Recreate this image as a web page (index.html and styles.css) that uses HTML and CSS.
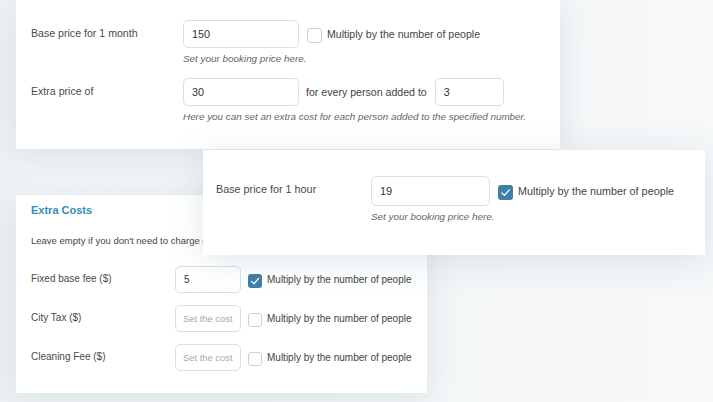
FILE: index.html
```html
<!DOCTYPE html>
<html lang="en">
<head>
    <meta charset="UTF-8">
    <meta name="viewport" content="width=device-width, initial-scale=1.0">
    <title>Booking prices</title>
    <link rel="stylesheet" href="styles.css">
</head>
<body>

    <div class="canvas">

        <!-- Monthly price card -->
        <div class="card card-month">
            <div class="row">
                <label class="lbl">Base price for 1 month</label>
                <div class="field">
                    <div class="line">
                        <span class="input wide">150</span>
                        <span class="box"></span>
                        <span class="txt">Multiply by the number of people</span>
                    </div>
                    <p class="desc">Set your booking price here.</p>
                </div>
            </div>
            <div class="row row-extra">
                <label class="lbl">Extra price of</label>
                <div class="field">
                    <div class="line">
                        <span class="input wide">30</span>
                        <span class="txt between">for every person added to</span>
                        <span class="input small">3</span>
                    </div>
                    <p class="desc">Here you can set an extra cost for each person added to the specified number.</p>
                </div>
            </div>
        </div>

        <!-- Extra costs card -->
        <div class="card card-costs">
            <h3 class="title">Extra Costs</h3>
            <p class="note">Leave empty if you don't need to charge extra costs.</p>
            <div class="cost">
                <label class="lbl">Fixed base fee ($)</label>
                <span class="input tiny">5</span>
                <span class="box checked"><svg viewBox="0 0 14 14" width="14" height="14"><path d="M3.6 7.4 L6 9.8 L10.6 4.4" fill="none" stroke="#fff" stroke-width="1.3" stroke-linecap="round" stroke-linejoin="round"/></svg></span>
                <span class="txt">Multiply by the number of people</span>
            </div>
            <div class="cost">
                <label class="lbl">City Tax ($)</label>
                <span class="input tiny placeholder">Set the cost</span>
                <span class="box"></span>
                <span class="txt">Multiply by the number of people</span>
            </div>
            <div class="cost">
                <label class="lbl">Cleaning Fee ($)</label>
                <span class="input tiny placeholder">Set the cost</span>
                <span class="box"></span>
                <span class="txt">Multiply by the number of people</span>
            </div>
        </div>

        <!-- Hourly price card -->
        <div class="card card-hour">
            <div class="row">
                <label class="lbl">Base price for 1 hour</label>
                <div class="field">
                    <div class="line">
                        <span class="input wide">19</span>
                        <span class="box checked"><svg viewBox="0 0 15 15" width="15" height="15"><path d="M3.8 7.9 L6.4 10.4 L11.2 4.8" fill="none" stroke="#fff" stroke-width="1.3" stroke-linecap="round" stroke-linejoin="round"/></svg></span>
                        <span class="txt">Multiply by the number of people</span>
                    </div>
                    <p class="desc">Set your booking price here.</p>
                </div>
            </div>
        </div>

    </div>

</body>
</html>
```

FILE: styles.css
```css
body {
    margin: 0;
    padding: 0;
    font-family: 'Liberation Sans', Arial, sans-serif;
    background-color: #f5f7f8;
    color: #444;
}

.canvas {
    position: relative;
    width: 713px;
    height: 402px;
    overflow: hidden;
    background: linear-gradient(90deg, #eef2f4 0, #f3f6f7 40px, #f6f8f9 100%);
}

/* cards lie free on the canvas, overlapping each other */
.card {
    position: absolute;
    background-color: #fff;
    box-shadow: 0 6px 32px rgba(120, 150, 170, 0.22);
    box-sizing: border-box;
}

.card-month {
    left: 16px;
    top: 0;
    width: 544px;
    height: 149px;
    padding: 20px 0 0 15px;
    font-size: 10.6px;
}

.card-hour {
    left: 203px;
    top: 150px;
    width: 502px;
    height: 105px;
    padding: 26px 0 0 13px;
    font-size: 10.8px;
}

.card-costs {
    left: 16px;
    top: 195px;
    width: 411px;
    height: 198px;
    padding: 8px 0 0 15px;
    font-size: 10px;
}

/* rows with a label and a field */
.row {
    display: grid;
    grid-template-columns: 152px auto;
    align-items: start;
}

.card-hour .row {
    grid-template-columns: 155px auto;
}

.row-extra {
    margin-top: 13px;
}

.lbl {
    color: #4a4a4a;
    line-height: 26px;
}

.line {
    display: flex;
    align-items: center;
}

.input {
    display: flex;
    align-items: center;
    box-sizing: border-box;
    height: 28px;
    padding: 0 8px;
    border: 1px solid #dedede;
    border-radius: 5px;
    color: #333;
    font-size: 10.8px;
    background-color: #fff;
    white-space: nowrap;
}

.input.wide {
    width: 116px;
}

.card-hour .input.wide {
    width: 119px;
    height: 30px;
    font-size: 11px;
}

.input.small {
    width: 69px;
}

.input.tiny {
    width: 66px;
    height: 27px;
    font-size: 10px;
}

.input.placeholder {
    padding: 0 6px 0 7px;
    color: #a8a8a8;
    font-size: 9.4px;
}

.box {
    display: block;
    width: 15px;
    height: 15px;
    box-sizing: border-box;
    margin: 2px 5px 0 8px;
    border: 1px solid #cfcfcf;
    border-radius: 3px;
    background-color: #fff;
}

.box.checked {
    border: none;
    background-color: #3f7fa3;
}

.box svg {
    display: block;
}

.txt {
    color: #444;
    white-space: nowrap;
}

.between {
    margin: 0 8px 0 7px;
}

.desc {
    margin: 5px 0 0 0;
    font-size: 9.9px;
    line-height: 12px;
    font-style: italic;
    color: #666;
}

/* extra costs list */
.title {
    margin: 0;
    font-size: 11px;
    line-height: 14px;
    font-weight: bold;
    color: #3a8cb9;
}

.note {
    margin: 18px 0 19px 0;
    font-size: 9.5px;
    line-height: 12px;
    color: #444;
    white-space: nowrap;
}

.cost {
    display: grid;
    grid-template-columns: 144px auto auto 1fr;
    align-items: center;
    margin-bottom: 12px;
}

.cost .lbl {
    line-height: 12px;
    margin-top: -2px;
}

.cost .box {
    width: 14px;
    height: 14px;
    margin: 2px 5px 0 7px;
}
```
